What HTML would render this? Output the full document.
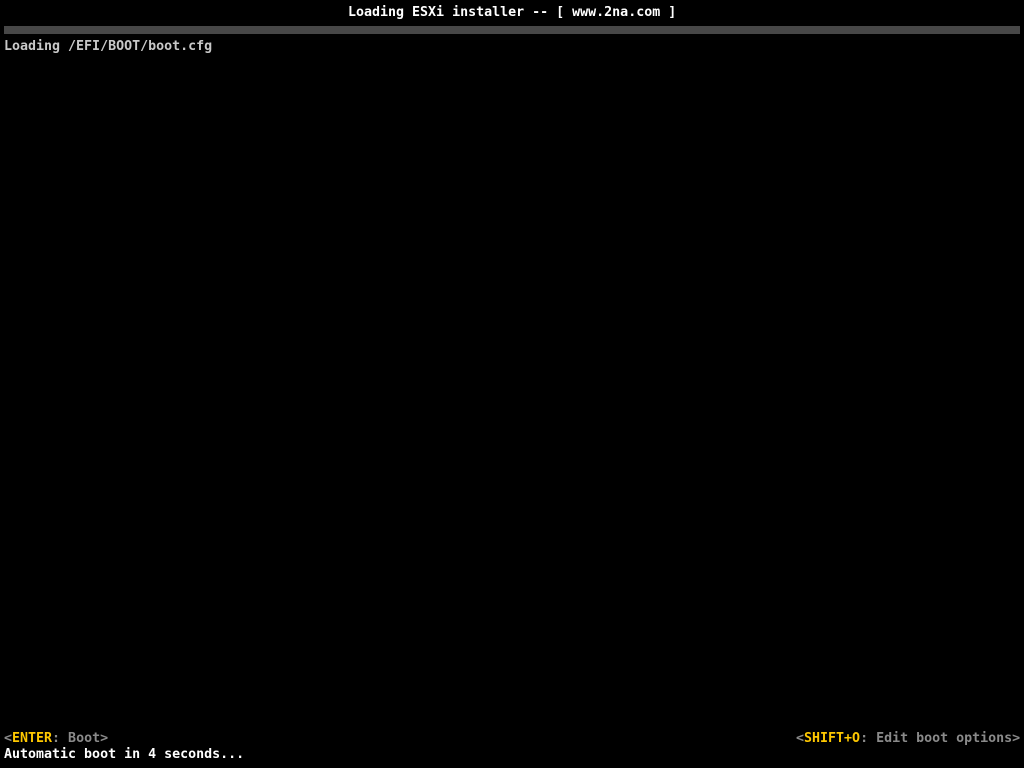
<!DOCTYPE html>
<html><head><meta charset="utf-8"><style>
html,body{margin:0;padding:0;background:#000;width:1024px;height:768px;overflow:hidden}
.t{position:absolute;font-family:"DejaVu Sans Mono","Liberation Mono",monospace;font-size:13.3px;line-height:16px;white-space:pre;font-weight:bold}
.g{color:#8a8a8a}.y{color:#ffc800}
</style></head><body>
<div class="t" style="left:348px;top:5px;color:#fff">Loading ESXi installer -- [ www.2na.com ]</div>
<div style="position:absolute;left:4px;top:26px;width:1016px;height:8px;background:#474747"></div>
<div class="t" style="left:4px;top:39px;color:#c8c8c8">Loading /EFI/BOOT/boot.cfg</div>
<div class="t" style="left:4px;top:731px"><span class="g">&lt;</span><span class="y">ENTER</span><span class="g">: Boot&gt;</span></div>
<div class="t" style="left:796px;top:731px"><span class="g">&lt;</span><span class="y">SHIFT+O</span><span class="g">: Edit boot options&gt;</span></div>
<div class="t" style="left:4px;top:747px;color:#fff">Automatic boot in 4 seconds...</div>
</body></html>
